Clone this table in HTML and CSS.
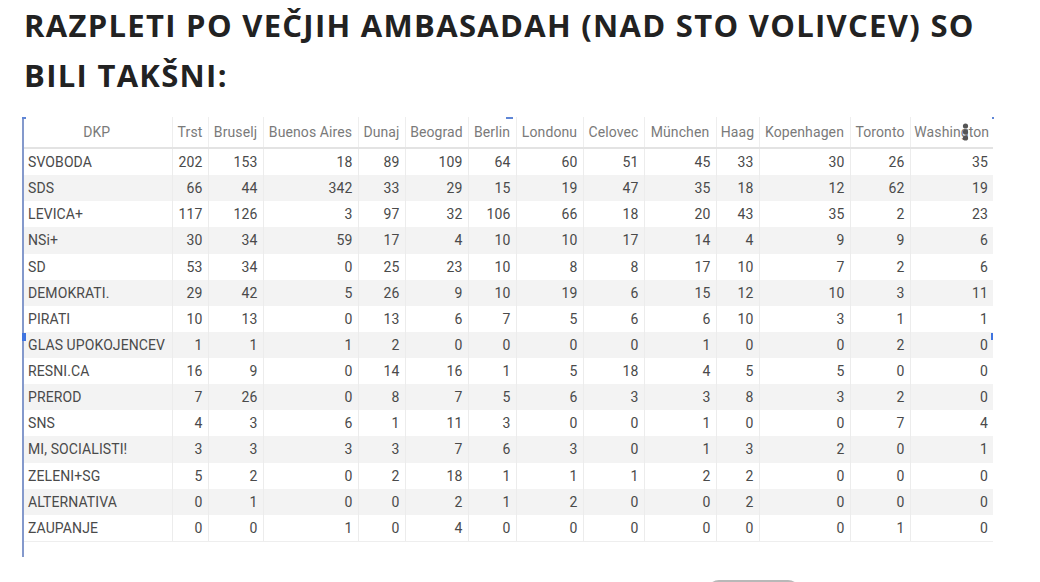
FILE: index.html
```html
<!DOCTYPE html>
<html lang="sl">
<head>
<meta charset="utf-8">
<title>Razpleti po večjih ambasadah</title>
<link rel="stylesheet" href="styles.css">
</head>
<body>
<h1 class="title">RAZPLETI PO VEČJIH AMBASADAH (NAD STO VOLIVCEV) SO BILI TAKŠNI:</h1>
<div class="sheet">
  <table class="results">
    <colgroup>
      <col style="width:150px"><col style="width:36px"><col style="width:55px"><col style="width:95px"><col style="width:47px"><col style="width:63px"><col style="width:48px"><col style="width:67px"><col style="width:61px"><col style="width:72px"><col style="width:43px"><col style="width:91px"><col style="width:60px"><col style="width:83px">
    </colgroup>
    <thead>
      <tr><th>DKP</th><th>Trst</th><th>Bruselj</th><th>Buenos Aires</th><th>Dunaj</th><th>Beograd</th><th>Berlin</th><th>Londonu</th><th>Celovec</th><th>München</th><th>Haag</th><th>Kopenhagen</th><th>Toronto</th><th class="last-head">Washington</th></tr>
    </thead>
    <tbody>
      <tr><td>SVOBODA</td><td>202</td><td>153</td><td>18</td><td>89</td><td>109</td><td>64</td><td>60</td><td>51</td><td>45</td><td>33</td><td>30</td><td>26</td><td>35</td></tr>
      <tr><td>SDS</td><td>66</td><td>44</td><td>342</td><td>33</td><td>29</td><td>15</td><td>19</td><td>47</td><td>35</td><td>18</td><td>12</td><td>62</td><td>19</td></tr>
      <tr><td>LEVICA+</td><td>117</td><td>126</td><td>3</td><td>97</td><td>32</td><td>106</td><td>66</td><td>18</td><td>20</td><td>43</td><td>35</td><td>2</td><td>23</td></tr>
      <tr><td>NSi+</td><td>30</td><td>34</td><td>59</td><td>17</td><td>4</td><td>10</td><td>10</td><td>17</td><td>14</td><td>4</td><td>9</td><td>9</td><td>6</td></tr>
      <tr><td>SD</td><td>53</td><td>34</td><td>0</td><td>25</td><td>23</td><td>10</td><td>8</td><td>8</td><td>17</td><td>10</td><td>7</td><td>2</td><td>6</td></tr>
      <tr><td>DEMOKRATI.</td><td>29</td><td>42</td><td>5</td><td>26</td><td>9</td><td>10</td><td>19</td><td>6</td><td>15</td><td>12</td><td>10</td><td>3</td><td>11</td></tr>
      <tr><td>PIRATI</td><td>10</td><td>13</td><td>0</td><td>13</td><td>6</td><td>7</td><td>5</td><td>6</td><td>6</td><td>10</td><td>3</td><td>1</td><td>1</td></tr>
      <tr><td>GLAS UPOKOJENCEV</td><td>1</td><td>1</td><td>1</td><td>2</td><td>0</td><td>0</td><td>0</td><td>0</td><td>1</td><td>0</td><td>0</td><td>2</td><td>0</td></tr>
      <tr><td>RESNI.CA</td><td>16</td><td>9</td><td>0</td><td>14</td><td>16</td><td>1</td><td>5</td><td>18</td><td>4</td><td>5</td><td>5</td><td>0</td><td>0</td></tr>
      <tr><td>PREROD</td><td>7</td><td>26</td><td>0</td><td>8</td><td>7</td><td>5</td><td>6</td><td>3</td><td>3</td><td>8</td><td>3</td><td>2</td><td>0</td></tr>
      <tr><td>SNS</td><td>4</td><td>3</td><td>6</td><td>1</td><td>11</td><td>3</td><td>0</td><td>0</td><td>1</td><td>0</td><td>0</td><td>7</td><td>4</td></tr>
      <tr><td>MI, SOCIALISTI!</td><td>3</td><td>3</td><td>3</td><td>3</td><td>7</td><td>6</td><td>3</td><td>0</td><td>1</td><td>3</td><td>2</td><td>0</td><td>1</td></tr>
      <tr><td>ZELENI+SG</td><td>5</td><td>2</td><td>0</td><td>2</td><td>18</td><td>1</td><td>1</td><td>1</td><td>2</td><td>2</td><td>0</td><td>0</td><td>0</td></tr>
      <tr><td>ALTERNATIVA</td><td>0</td><td>1</td><td>0</td><td>0</td><td>2</td><td>1</td><td>2</td><td>0</td><td>0</td><td>2</td><td>0</td><td>0</td><td>0</td></tr>
      <tr><td>ZAUPANJE</td><td>0</td><td>0</td><td>1</td><td>0</td><td>4</td><td>0</td><td>0</td><td>0</td><td>0</td><td>0</td><td>0</td><td>1</td><td>0</td></tr>
    </tbody>
  </table>

  <span class="sel sel-left"></span>
  <span class="sel sel-corner"></span>
  <span class="sel sel-dash"></span>
  <span class="sel sel-dot"></span>
  <span class="sel sel-row-left"></span>
  <span class="sel sel-row-right"></span>
  <svg class="resize-handle" width="7" height="18" viewBox="0 0 7 18" aria-hidden="true">
    <ellipse cx="3.5" cy="3" rx="2.6" ry="2.6" fill="#555"/>
    <ellipse cx="3.5" cy="9" rx="2.6" ry="2.8" fill="#555"/>
    <ellipse cx="3.5" cy="15" rx="2.6" ry="2.6" fill="#555"/>
  </svg>
</div>
<div class="footer-bar"><span class="pill"></span></div>
</body>
</html>
```

FILE: styles.css
```css
html, body {
  margin: 0;
  padding: 0;
  background: #ffffff;
}

body {
  width: 1040px;
  height: 582px;
  overflow: hidden;
}

.title {
  margin: 0;
  padding: 0 40px 0 24px;
  font-family: "Open Sans", "Noto Sans", sans-serif;
  font-weight: 700;
  font-size: 31px;
  line-height: 50px;
  color: #222222;
  letter-spacing: 1.3px;
}

.sheet {
  position: relative;
  margin: 17px 0 0 22px;
  width: 972px;
  height: 440px;
}

.results {
  border-collapse: collapse;
  table-layout: fixed;
  width: 971px;
  font-family: Roboto, "Liberation Sans", sans-serif;
  font-size: 14px;
  letter-spacing: 0.1px;
}

.results th {
  height: 30px;
  padding: 0 3px;
  font-weight: 400;
  color: #7a7a7a;
  text-align: center;
  white-space: nowrap;
  overflow: hidden;
  border-left: 1px solid #eeeeee;
  border-bottom: 2px solid #e3e3e3;
}

.results th:first-child {
  border-left: none;
}

.results td {
  height: 26.13px;
  padding: 0 5px 0 6px;
  color: #4a4a4a;
  text-align: right;
  white-space: nowrap;
  border-left: 1px solid #ececec;
}

.results td:first-child {
  text-align: left;
  border-left: none;
}

.results tbody tr:nth-child(even) td {
  background: #f3f3f3;
}

.results tbody tr:last-child td {
  border-bottom: 1px solid #eeeeee;
}

.sel {
  position: absolute;
  background: #5f86d6;
}

.sel-left {
  left: 0;
  top: 0;
  width: 2px;
  height: 440px;
  background: #8499cc;
}

.sel-corner {
  left: 0;
  top: 0;
  width: 4px;
  height: 2px;
}

.sel-dash {
  left: 484px;
  top: 0;
  width: 7px;
  height: 2px;
}

.sel-dot {
  left: 970px;
  top: 0;
  width: 2px;
  height: 2px;
}

.sel-row-left {
  left: 0;
  top: 216px;
  width: 4px;
  height: 8px;
  background: #3f74e0;
}

.sel-row-right {
  left: 969px;
  top: 216px;
  width: 2px;
  height: 7px;
  background: #3f74e0;
}

.resize-handle {
  position: absolute;
  left: 940px;
  top: 6px;
}

.footer-bar {
  position: relative;
  height: 25px;
}

.pill {
  position: absolute;
  left: 707px;
  top: 23px;
  width: 93px;
  height: 10px;
  border-top: 2px solid #b8b8b8;
  border-radius: 40px 40px 0 0;
}
```
